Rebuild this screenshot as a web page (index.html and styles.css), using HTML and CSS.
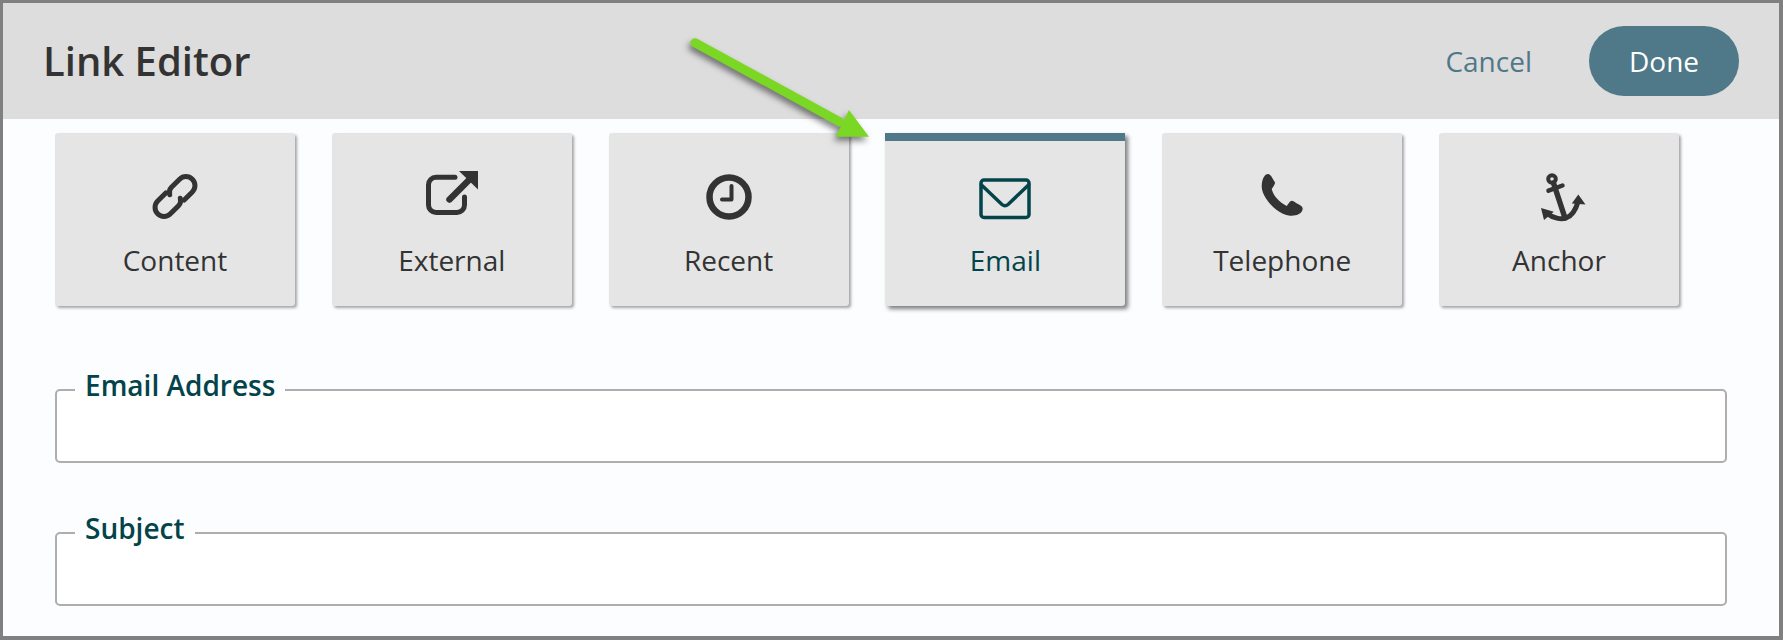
FILE: index.html
```html
<!DOCTYPE html>
<html lang="en">
<head>
<meta charset="utf-8">
<title>Link Editor</title>
<link rel="stylesheet" href="styles.css">
</head>
<body>
<div class="window">
  <header class="head">
    <h1 class="title">Link Editor</h1>
    <div class="actions">
      <a class="cancel">Cancel</a>
      <button class="done" type="button">Done</button>
    </div>
  </header>
  <nav class="tabs">
    <div class="tab">
      <svg class="icon" viewBox="0 0 60 60"><g class="line" stroke-width="5" transform="translate(30 28.5) rotate(45)"><path d="M9 -4V-15.500a9 9 0 0 0-18 0V-4c0 3 1.500 5 4 6.500"/><path transform="rotate(180)" d="M9 -4V-15.500a9 9 0 0 0-18 0V-4c0 3 1.500 5 4 6.500"/></g></svg>
      <span class="label">Content</span>
    </div>
    <div class="tab">
      <svg class="icon" viewBox="0 0 60 60"><path class="line" stroke-width="5" d="M33 9.200H14a7.500 7.500 0 0 0-7.500 7.500V37a7.500 7.500 0 0 0 7.500 7.500H35a7.500 7.500 0 0 0 7.500-7.500V29"/><path class="line" stroke-width="6.500" stroke-linecap="butt" d="M27.500 31.500L47 12"/><path class="fill" d="M37 3H56V21.500z"/></svg>
      <span class="label">External</span>
    </div>
    <div class="tab">
      <svg class="icon" viewBox="0 0 60 60"><circle class="line" stroke-width="6.500" cx="30" cy="29" r="19.500"/><path class="line" stroke-width="4" stroke-linecap="butt" d="M32.500 18V31.500H23"/></svg>
      <span class="label">Recent</span>
    </div>
    <div class="tab tab-active">
      <svg class="icon" viewBox="0 0 60 60"><rect class="line" stroke-width="3.500" x="6" y="12" width="48" height="37.500" rx="3"/><path class="line" stroke-width="3.500" d="M6.500 17L27 36.500q3 2.500 6 0L53.500 17"/></svg>
      <span class="label">Email</span>
    </div>
    <div class="tab">
      <svg class="icon" viewBox="0 0 60 60"><path class="fill" d="M16.300 6C18 6.500 19 7.500 20 9.500L23 14.500C23.300 16 21.500 18.500 19.700 21C20.500 24 22 27.500 24.700 30.300C27.500 33.500 30.500 36 34.700 38C36.500 35.500 38 33 39.700 32.700C41 32.700 43.500 34.500 46 36C48.500 37.500 50.700 38.500 50.700 40.500C50.700 43 49 45 47.300 45.800C44.500 47.500 41 48 38 47.700C33 47 28.500 45 24.700 42C20 38.500 16.500 34.500 14 30.500C11.500 26.500 9.700 22.500 9.700 18.500C9.700 14 10.700 10.500 12.500 8C13.500 6.800 14.800 5.800 16.300 6Z"/></svg>
      <span class="label">Telephone</span>
    </div>
    <div class="tab">
      <svg class="icon" viewBox="0 0 60 60"><circle class="line" stroke-width="4" cx="23" cy="11" r="3.800"/><path class="line" stroke-width="5.500" stroke-linecap="butt" d="M24.500 15L36 50"/><path class="line" stroke-width="4.500" d="M19.500 22.700L33.500 17.500"/><path class="line" stroke-width="5" stroke-linecap="butt" d="M18 45.500C24 50 32 52 37 50C43 48 47 41 49.300 33"/><path class="fill" d="M49.300 26.500L42.800 35.500L56.500 36.500zM12 40L24.800 43.700L15 52z"/></svg>
      <span class="label">Anchor</span>
    </div>
  </nav>
  <form class="fields">
    <fieldset class="field"><legend class="legend">Email Address</legend></fieldset>
    <fieldset class="field"><legend class="legend">Subject</legend></fieldset>
  </form>
  <svg class="arrow" viewBox="0 0 200 120"><path class="arrow-shaft" d="M15 12.700L160 92"/><path class="arrow-head" d="M169 80L189 106.700H155.700z"/></svg>
</div>
</body>
</html>
```
FILE: styles.css
```css
* { box-sizing: border-box; }
html, body { margin: 0; padding: 0; }
body { width: 1783px; height: 640px; overflow: hidden; background: #808080; font-family: "Open Sans", "Noto Sans", sans-serif; color: #333; }
.window { position: relative; width: 1783px; height: 640px; border-style: solid; border-color: #808080; border-width: 3px 4px 4px 3px; background: #fcfdff; overflow: hidden; }
.head { display: flex; align-items: center; justify-content: space-between; height: 116px; padding: 0 40px 0 40px; background: #dddddd; }
.title { margin: 0; font-size: 40px; line-height: 52px; font-weight: 600; color: #333; }
.actions { display: flex; align-items: center; gap: 57px; }
.cancel { font-size: 28px; line-height: 36px; color: #4f7888; }
.done { width: 150px; height: 70px; border: 0; border-radius: 35px; background: #4f7888; color: #fff; font: inherit; font-size: 28px; padding: 0; }
.tabs { display: flex; gap: 36.800px; padding: 14px 0 0 52px; }
.tab { display: flex; flex-direction: column; align-items: center; width: 240px; height: 173px; padding-top: 35px; background: #e5e5e5; border-radius: 3px; box-shadow: 2px 2px 3px rgba(0,0,0,.35); }
.tab-active { border-top: 8px solid #4f7888; padding-top: 27px; color: #03444a; border-radius: 0 0 3px 3px; box-shadow: 3px 3px 4px rgba(0,0,0,.5); }
.icon { display: block; width: 60px; height: 60px; flex: none; }
.line { fill: none; stroke: currentColor; stroke-linecap: round; stroke-linejoin: round; }
.fill { fill: currentColor; }
.label { margin-top: 14px; font-size: 28px; line-height: 36px; }
.fields { display: flex; flex-direction: column; gap: 47px; padding: 61px 0 0 52px; }
.field { width: 1672px; height: 96px; margin: 0; padding: 0 0 0 18px; border: 2px solid #aeaeae; border-radius: 5px; background: #fff; }
.legend { padding: 0 10px 10px; font-size: 28px; line-height: 36px; font-weight: 600; color: #03444a; }
.arrow { position: absolute; left: 677px; top: 27px; width: 200px; height: 120px; overflow: visible; filter: drop-shadow(-2px 4px 3px rgba(0,0,0,.5)); }
.arrow-shaft { fill: none; stroke: #7ad723; stroke-width: 9; stroke-linecap: round; }
.arrow-head { fill: #7ad723; }
```
